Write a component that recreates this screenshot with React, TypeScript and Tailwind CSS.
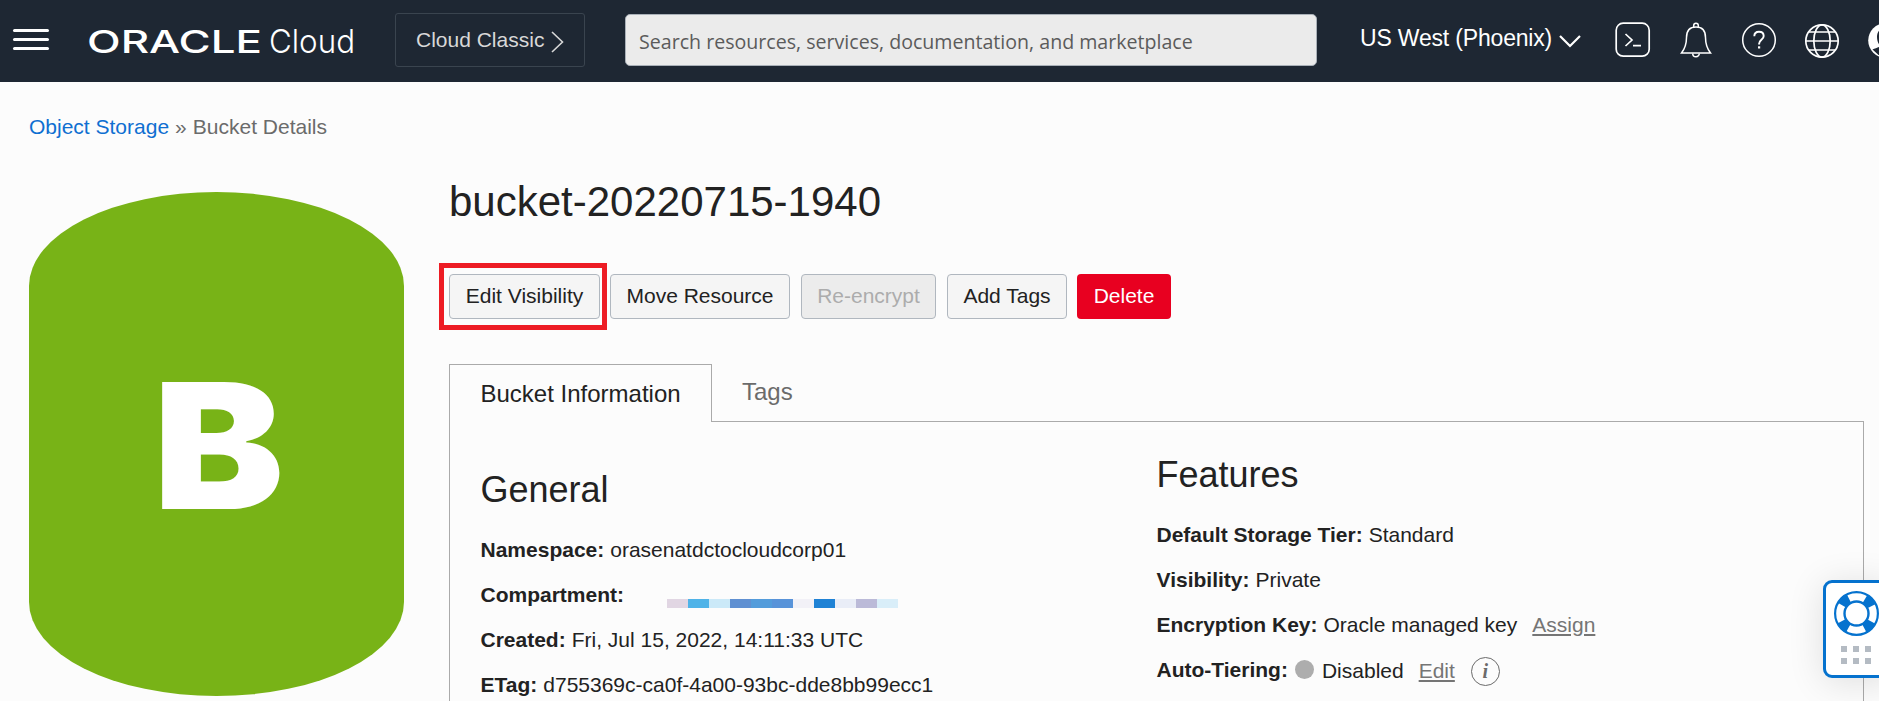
import React from "react";

const swatches = [
  "bg-[#e1d6e3]", "bg-[#4fb3e8]", "bg-[#cbe9f8]", "bg-[#5f90d2]", "bg-[#539cdb]", "bg-[#5893d9]",
  "bg-[#f2f1f7]", "bg-[#1f82d5]", "bg-[#e9edf7]", "bg-[#bbbad8]", "bg-[#d9eef9]",
];

function TerminalIcon() {
  return (
    <svg width="36" height="36" viewBox="0 0 36 36" fill="none" stroke="#fff" strokeWidth="1.7" className="shrink-0">
      <rect x="1.2" y="1.2" width="33" height="33" rx="7" />
      <path d="M10.5 12 17 18l-6.500 6M18 23.600h8" />
    </svg>
  );
}

function BellIcon() {
  return (
    <svg width="32" height="36" viewBox="0 0 32 36" fill="none" stroke="#fff" strokeWidth="1.500" className="shrink-0">
      <path d="M1.500 31h29c-3.500-4.500-5-8.500-5-15.500C25.500 8.500 22 5 16 5S6.500 8.500 6.500 15.500c0 7-1.500 11-5 15.500Z" />
      <path d="M13.700 5.200V3.500a2.300 2.300 0 0 1 4.600 0v1.700M12.700 31.500a3.300 3.300 0 0 0 6.600 0" />
    </svg>
  );
}

function HelpIcon() {
  return (
    <svg width="36" height="36" viewBox="0 0 36 36" fill="none" stroke="#fff" strokeWidth="1.500" className="shrink-0">
      <circle cx="18" cy="18" r="16.300" />
      <path d="M13.300 14.300c0-3 2-4.600 4.700-4.600s4.700 1.700 4.700 4.300c0 3.800-4.600 3.900-4.600 7.800v.6" strokeWidth="1.900" />
      <path d="M18.100 24.300v2.200" strokeWidth="2.200" />
    </svg>
  );
}

function GlobeIcon() {
  return (
    <svg width="36" height="36" viewBox="0 0 36 36" fill="none" stroke="#fff" strokeWidth="1.700" className="shrink-0">
      <circle cx="18" cy="18" r="16.200" />
      <ellipse cx="18" cy="18" rx="8.200" ry="16.200" />
      <path d="M1.800 18h32.400M4.800 9h26.400M4.800 27h26.400" />
    </svg>
  );
}

function Header() {
  return (
    <header className="flex h-[82px] shrink-0 items-start overflow-hidden bg-[#1e2733] text-white">
      <button aria-label="Menu" className="ml-[13px] mt-[29px] flex w-9 shrink-0 flex-col gap-1.5">
        <span className="h-[3px] w-full rounded-full bg-white" />
        <span className="h-[3px] w-full rounded-full bg-white" />
        <span className="h-[3px] w-full rounded-full bg-white" />
      </button>
      <svg className="ml-[29px] mt-[10px] shrink-0" width="287" height="62" viewBox="0 0 287 62">
        <text x="9" y="42.500" textLength="175" lengthAdjust="spacingAndGlyphs" fill="#fff" className="font-['Inter',sans-serif] text-[31px] font-medium">ORACLE</text>
        <text x="191" y="42.500" textLength="86" lengthAdjust="spacingAndGlyphs" fill="#fff" className="font-['Inter',sans-serif] text-[33px] font-light">Cloud</text>
      </svg>
      <button className="ml-[30px] mt-[13px] flex h-[54px] w-[190px] shrink-0 items-start rounded-[3px] border border-[#3a444f] pl-5 text-[21px] leading-7 text-[#d8d8d8]">
        <span className="mt-3 whitespace-nowrap">Cloud Classic</span>
        <svg className="ml-[7px] mt-[17px] shrink-0" width="13" height="22" viewBox="0 0 13 22" fill="none" stroke="#d8d8d8" strokeWidth="1.600"><path d="M1 1l10.500 10L1 21" /></svg>
      </button>
      <div className="ml-[40px] mt-[14px] flex h-[52px] w-[692px] shrink-0 items-center rounded-[5px] border border-[#a9b0b8] bg-[#ebebeb] pl-[13px] pt-[3px] font-['Open_Sans',sans-serif] text-[19.600px] text-[#5b5b5b]">
        Search resources, services, documentation, and marketplace
      </div>
      <div className="ml-[43px] mt-[24px] w-[196px] shrink-0 whitespace-nowrap text-[23px] leading-7 tracking-[-0.18px]">US West (Phoenix)</div>
      <svg className="ml-[2px] mt-[33px] shrink-0" width="24" height="16" viewBox="0 0 24 16" fill="none" stroke="#fff" strokeWidth="2.200"><path d="M2 3l10 10L22 3" /></svg>
      <div className="ml-[33px] mt-[22px] flex items-start">
        <TerminalIcon />
        <div className="ml-[29px] flex"><BellIcon /></div>
        <div className="ml-[29px] flex"><HelpIcon /></div>
        <div className="ml-[27px] mt-px flex"><GlobeIcon /></div>
        <svg className="ml-[27px] shrink-0" width="36" height="36" viewBox="0 0 36 36">
          <circle cx="18.500" cy="18.500" r="17.300" fill="#fff" />
          <path d="M18.500 6C13 6 10 10 10 15c0 4 1.500 7 3.500 9-2 1.500-5 2-8 3.500l6 5.500h14l6-5.500c-3-1.500-6-2-8-3.500 2-2 3.500-5 3.500-9 0-5-3-9-8.500-9Z" fill="#1e2733" />
        </svg>
      </div>
    </header>
  );
}

function Field({ label, children }: { label: string; children?: React.ReactNode }) {
  return (
    <div className="flex h-[45px] items-center whitespace-nowrap">
      <span className="mr-1.5 font-bold">{label}</span>
      {children}
    </div>
  );
}

function HelpWidget() {
  return (
    <div className="absolute left-[1823px] top-[580px] flex h-[98px] w-[70px] flex-col rounded-[9px] border-[3px] border-[#0572ce] bg-white pl-2 pt-2 shadow-[0_4px_36px_rgba(0,0,0,0.12)]">
      <svg width="45" height="45" viewBox="0 0 45 45" fill="none">
        <circle cx="22.500" cy="22.500" r="21.400" stroke="#0572ce" strokeWidth="2.200" />
        <circle cx="22.500" cy="22.500" r="16.500" stroke="#0572ce" strokeWidth="10" strokeDasharray="9.500 16.418" strokeDashoffset="-8.209" />
        <circle cx="22.500" cy="22.500" r="12" stroke="#0572ce" strokeWidth="2.400" />
      </svg>
      <div className="ml-[7px] mt-[10px] grid w-[30px] grid-cols-3 gap-1.5">
        <span className="size-1.5 bg-[#b4bbc3]" />
        <span className="size-1.5 bg-[#b4bbc3]" />
        <span className="size-1.5 bg-[#b4bbc3]" />
        <span className="size-1.5 bg-[#b4bbc3]" />
        <span className="size-1.5 bg-[#b4bbc3]" />
        <span className="size-1.5 bg-[#b4bbc3]" />
      </div>
    </div>
  );
}

const button = "flex h-[45px] shrink-0 items-center justify-center whitespace-nowrap rounded-[4px] border border-[#b0b7bf] bg-[#f5f5f5] pb-0.5";

export default function App() {
  return (
    <div className="relative flex h-[701px] w-[1879px] flex-col overflow-hidden bg-[#fcfcfc] font-['Liberation_Sans',Arial,sans-serif] text-[21px] leading-7 text-[#222]">
      <Header />
      <nav className="ml-[29px] mt-[31px] flex text-[#6b6b6b]">
        <a className="text-[#0f6fd1]">Object Storage</a>
        <span className="ml-1.5 mr-[6px]">»</span>
        <span>Bucket Details</span>
      </nav>
      <main className="flex min-h-0 flex-1">
        <svg className="ml-[29px] mt-[51px] shrink-0" width="375" height="504" viewBox="0 0 375 504">
          <path d="M0 94A187.500 94 0 0 1 375 94V410A187.500 94 0 0 1 0 410Z" fill="#78b317" />
          <text x="124" y="316.500" textLength="131" lengthAdjust="spacingAndGlyphs" fill="#fff" className="font-['Inter',sans-serif] text-[175px] font-black">B</text>
        </svg>
        <section className="ml-[45px] flex w-[1415px] shrink-0 flex-col">
          <h1 className="mt-[37px] text-[42px] leading-[48px]">bucket-20220715-1940</h1>
          <div className="mt-[48px] flex">
            <div className="relative mr-[10px]">
              <button className={`${button} w-[151px]`}>Edit Visibility</button>
              <div className="absolute -left-[10px] -top-[11px] h-[67px] w-[168px] border-[5px] border-[#ed1c24]" />
            </div>
            <button className={`${button} mr-[11px] w-[180px]`}>Move Resource</button>
            <button className="mr-[11px] flex h-[45px] w-[135px] items-center justify-center rounded-[4px] border border-[#b0b7bf] bg-[#ececec] pb-0.5 text-[#acacac]">Re-encrypt</button>
            <button className={`${button} mr-[10px] w-[120px]`}>Add Tags</button>
            <button className="flex h-[45px] w-[94px] items-center justify-center rounded-[4px] bg-[#e80020] pb-0.5 text-white">Delete</button>
          </div>
          <div className="mt-[45px] flex h-[58px] shrink-0 text-[24px]">
            <div className="w-[263px] border-x border-t border-[#aaa] pl-[30.500px] pt-[15px]">Bucket Information</div>
            <div className="flex-1 border-b border-[#aaa] pl-[30px] pt-[14px] text-[#6b6b6b]">Tags</div>
          </div>
          <div className="flex min-h-0 flex-1 border-x border-[#aaa] pl-[30.500px]">
            <div className="w-[676px] shrink-0">
              <h2 className="mt-[48px] text-[36px] leading-10">General</h2>
              <div className="mt-[17px]">
                <Field label="Namespace:">orasenatdctocloudcorp01</Field>
                <Field label="Compartment:">
                  <div className="ml-[36.500px] mt-[18px] flex">
                    {swatches.map((c) => <span key={c} className={`h-[9px] w-[21px] ${c}`} />)}
                  </div>
                </Field>
                <Field label="Created:">Fri, Jul 15, 2022, 14:11:33 UTC</Field>
                <Field label="ETag:">d755369c-ca0f-4a00-93bc-dde8bb99ecc1</Field>
              </div>
            </div>
            <div>
              <h2 className="mt-[33px] text-[36px] leading-10">Features</h2>
              <div className="mt-[17px]">
                <Field label="Default Storage Tier:">Standard</Field>
                <Field label="Visibility:">Private</Field>
                <Field label="Encryption Key:">
                  Oracle managed key
                  <a className="ml-[15px] text-[#757575] underline decoration-2 underline-offset-2">Assign</a>
                </Field>
                <Field label="Auto-Tiering:">
                  <span className="ml-px size-[19px] rounded-full bg-[#adadad]" />
                  <span className="ml-2 mt-0.5">Disabled</span>
                  <a className="ml-[15px] mt-0.5 text-[#757575] underline decoration-2 underline-offset-2">Edit</a>
                  <span className="ml-4 mt-[3px] flex size-[29px] items-center justify-center rounded-full border border-[#6b6b6b] font-['Liberation_Serif',serif] text-[20px] font-bold italic leading-none text-[#6b6b6b]">i</span>
                </Field>
              </div>
            </div>
          </div>
        </section>
      </main>
      <HelpWidget />
    </div>
  );
}
